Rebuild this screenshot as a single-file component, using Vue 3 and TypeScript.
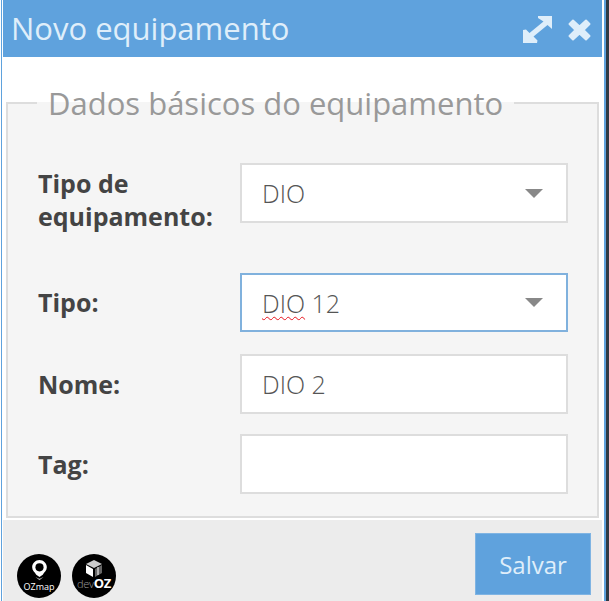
<script setup lang="ts">
import { ref } from 'vue';

const nome = ref('DIO 2');
const tag = ref('');
</script>

<template>
  <div class="frame">
    <div class="dialog">
      <header class="titlebar">
        <span class="title">Novo equipamento</span>
        <div class="actions">
          <svg class="icon" width="29" height="27" viewBox="0 0 29 27">
            <path d="M15 0 H29 V13 L24.5 9 L10.5 20.5 L14.5 24.5 L14 27 H0 V14 L3 13.5 L6.5 17 L20.5 5.5 L15 2 Z" fill="#dfeefa" />
          </svg>
          <svg class="icon" width="23" height="22" viewBox="0 0 23 22">
            <path d="M5 1.5 L11.5 7.5 L18 1.5 L21.5 5 L15.5 11 L21.5 17 L18 20.5 L11.5 14.5 L5 20.5 L1.5 17 L7.5 11 L1.5 5 Z" fill="#dfeefa" stroke="#dfeefa" stroke-width="2" stroke-linejoin="round" />
          </svg>
        </div>
      </header>

      <main class="content">
        <fieldset class="group">
          <legend>Dados básicos do equipamento</legend>

          <div class="row row-first">
            <label>Tipo de equipamento:</label>
            <div class="field select">
              <span>DIO</span>
              <i class="caret"></i>
            </div>
          </div>

          <div class="row row-tipo">
            <label>Tipo:</label>
            <div class="field select focused">
              <span><span class="misspelled">DIO</span> 12</span>
              <i class="caret"></i>
            </div>
          </div>

          <div class="row row-nome">
            <label>Nome:</label>
            <input v-model="nome" class="field" />
          </div>

          <div class="row row-tag">
            <label>Tag:</label>
            <input v-model="tag" class="field" />
          </div>
        </fieldset>
      </main>

      <footer class="footer">
        <div class="logos">
          <div class="logo">
            <svg width="15" height="22" viewBox="0 0 18 27" class="logo-mark">
              <path d="M9 0 C4 0 0 4 0 9 C0 13 3 15 5 18 L9 21 L13 18 C15 15 18 13 18 9 C18 4 14 0 9 0 Z" fill="#fff" />
              <circle cx="9" cy="9" r="5" fill="#000" />
              <path d="M4 21 L9 25 L14 21 L9 23 Z" fill="#aaa" />
            </svg>
            <span class="logo-text">OZmap</span>
          </div>
          <div class="logo second">
            <svg width="18" height="17" viewBox="0 0 18 17" class="logo-mark cube">
              <path d="M9 0 L17 4 L9 8 L1 4 Z" fill="#ccc" />
              <path d="M1 5 L8 9 V17 L1 13 Z" fill="#fff" />
              <path d="M10 9 L17 5 V13 L10 17 Z" fill="#666" />
              <path d="M13 7 V15" stroke="#fff" stroke-width="1" />
            </svg>
            <span class="logo-text dev">dev<b>OZ</b></span>
          </div>
        </div>
        <button class="save">Salvar</button>
      </footer>
    </div>
  </div>
</template>

<style>
html,
body {
  margin: 0;
  background: #fff;
}
</style>

<style scoped>
.frame {
  width: 609px;
  height: 601px;
  box-sizing: border-box;
  padding-left: 1px;
  padding-right: 3px;
  background: linear-gradient(to right, #fff 605px, #2f3a44 605px);
  font-family: "Open Sans", "Liberation Sans", sans-serif;
  overflow: hidden;
}

.dialog {
  height: 601px;
  box-sizing: border-box;
  border-left: 1px solid #5fa2dd;
  border-right: 2px solid #5fa2dd;
  padding: 0 2px 0 1px;
  background: #fff;
  display: flex;
  flex-direction: column;
}

.titlebar {
  height: 57px;
  flex: none;
  background: #5fa2dd;
  display: flex;
  align-items: center;
  justify-content: space-between;
  padding: 0 11px 0 8px;
}

.title {
  font-size: 31px;
  color: #dfeefa;
  line-height: 57px;
}

.actions {
  display: flex;
  align-items: center;
  gap: 16px;
  margin-top: 2px;
}

.content {
  flex: none;
  height: 462px;
  padding: 0 3px;
  box-sizing: border-box;
}

.group {
  margin: 27px 0 0;
  padding: 0 29px 0 30px;
  height: 434px;
  box-sizing: border-box;
  border: 2px solid #ddd;
  background: #f5f5f5;
  min-width: 0;
}

legend {
  font-size: 31px;
  color: #999;
  padding: 0 11px;
  margin-left: -1px;
  line-height: 38px;
}

.row {
  display: flex;
  align-items: center;
  justify-content: space-between;
}

.row-first {
  margin-top: 41px;
  align-items: flex-start;
}

.row-first label {
  margin-top: 4px;
}

.row-tipo {
  margin-top: 40px;
}

.row-nome {
  margin-top: 22px;
}

.row-tag {
  margin-top: 20px;
}

label {
  font-size: 25px;
  font-weight: 700;
  color: #444;
  line-height: 33px;
  width: 195px;
}

.field {
  width: 328px;
  height: 60px;
  box-sizing: border-box;
  border: 2px solid #ddd;
  background: #fff;
  font-family: inherit;
  font-size: 25px;
  font-weight: 300;
  color: #555;
  padding: 0 20px;
  outline: none;
  display: block;
}

.select {
  display: flex;
  align-items: center;
  justify-content: space-between;
  padding-right: 23px;
}

.focused {
  border-color: #80b1dd;
  height: 59px;
}

.misspelled {
  text-decoration: underline wavy #e8141e;
  text-decoration-thickness: 1px;
  text-underline-offset: 3px;
}

.caret {
  width: 0;
  height: 0;
  border-left: 9px solid transparent;
  border-right: 9px solid transparent;
  border-top: 9px solid #888;
}

.footer {
  flex: 1;
  margin-top: 1px;
  background: #ececec;
  display: flex;
  justify-content: space-between;
  padding: 13px 11px 0 14px;
  min-height: 0;
}

.logos {
  display: flex;
  gap: 11px;
  padding-top: 21px;
}

.logo {
  width: 44px;
  height: 44px;
  border-radius: 50%;
  background: #000;
  position: relative;
  overflow: hidden;
  display: flex;
  flex-direction: column;
  align-items: center;
}

.logo-mark {
  margin-top: 6px;
  flex: none;
}

.logo-mark.cube {
  margin-top: 6px;
}

.logo-text {
  position: absolute;
  left: 0;
  right: 0;
  bottom: 5px;
  text-align: center;
  font-size: 9px;
  line-height: 12px;
  color: #fff;
}

.dev {
  color: #999;
  bottom: 8px;
  font-size: 11px;
  letter-spacing: -0.3px;
  font-weight: 300;
}

.dev b {
  color: #fff;
  font-size: 13px;
  font-weight: 700;
}

.save {
  width: 116px;
  height: 62px;
  background: #5fa2dd;
  border: 1px solid #7fb4e3;
  color: #dfeefa;
  font-family: inherit;
  font-size: 24px;
  padding: 0;
}
</style>
